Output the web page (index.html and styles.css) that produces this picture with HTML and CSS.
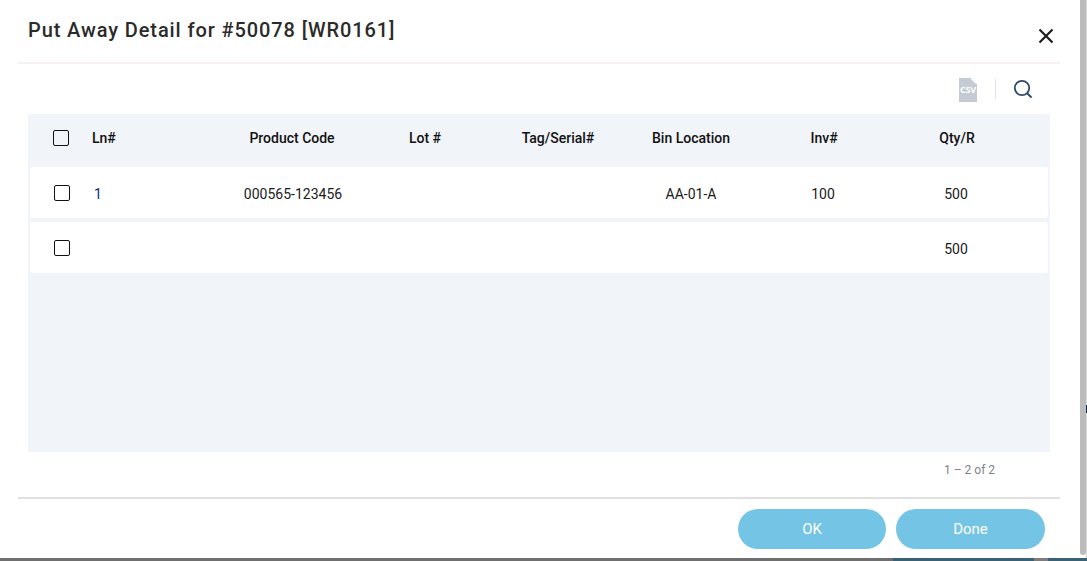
FILE: index.html
```html
<!DOCTYPE html>
<html lang="en">
<head>
<meta charset="utf-8">
<title>Put Away Detail</title>
<link rel="stylesheet" href="styles.css">
</head>
<body>
<div class="page">
  <div class="main">
    <div class="modal">
      <header class="head">
        <h1 class="title">Put Away Detail for #50078 [WR0161]</h1>
        <button class="close" aria-label="Close">
          <svg width="16" height="16" viewBox="0 0 16 16"><path d="M1.5 1.5 14.5 14.5M14.5 1.5 1.5 14.5" stroke="#1d1d1d" stroke-width="2.2" fill="none"/></svg>
        </button>
      </header>
      <div class="tools">
        <div class="csv">
          <svg class="csv-bg" width="18" height="24" viewBox="0 0 18 24"><path d="M0 0H12L18 6V24H0Z" fill="#c5cbd4"/><path d="M12.5 0.5 17.5 5.5" stroke="#fff" stroke-width="1.4"/></svg>
          <span class="csv-text">CSV</span>
        </div>
        <span class="sep"></span>
        <svg class="search" width="20" height="20" viewBox="0 0 20 20"><circle cx="9" cy="9" r="7.2" stroke="#2f4a66" stroke-width="1.8" fill="none"/><path d="M14.2 14.2 18.6 18.6" stroke="#2f4a66" stroke-width="2" fill="none"/></svg>
      </div>
      <div class="panel">
        <div class="grid headrow">
          <span class="box"></span>
          <span class="start">Ln#</span>
          <span>Product Code</span>
          <span>Lot #</span>
          <span>Tag/Serial#</span>
          <span>Bin Location</span>
          <span>Inv#</span>
          <span>Qty/R</span>
        </div>
        <div class="grid row">
          <span class="box"></span>
          <span class="cell start link">1</span>
          <span class="cell">000565-123456</span>
          <span class="cell"></span>
          <span class="cell"></span>
          <span class="cell shift-bin">AA-01-A</span>
          <span class="cell shift-inv">100</span>
          <span class="cell shift-qty">500</span>
        </div>
        <div class="grid row">
          <span class="box"></span>
          <span class="cell"></span>
          <span class="cell"></span>
          <span class="cell"></span>
          <span class="cell"></span>
          <span class="cell"></span>
          <span class="cell"></span>
          <span class="cell shift-qty">500</span>
        </div>
      </div>
      <div class="pager">1 – 2 of 2</div>
      <footer class="foot">
        <button class="btn">OK</button>
        <button class="btn done">Done</button>
      </footer>
    </div>
    <div class="track"></div>
    <div class="edge"><span class="edge-a"></span><span class="edge-b"></span><span class="edge-c"></span></div>
  </div>
  <div class="strip"><span class="s1"></span><span class="s2"></span><span class="s3"></span><span class="s4"></span></div>
</div>
</body>
</html>
```
FILE: styles.css
```css
* { box-sizing: border-box; }
html, body { margin: 0; padding: 0; background: #fff; }
body { font-family: Roboto, "Liberation Sans", sans-serif; color: #111; overflow: hidden; }
.page { width: 1087px; height: 561px; display: flex; flex-direction: column; overflow: hidden; }
.main { flex: 1; display: flex; min-height: 0; }
.modal { width: 1080px; padding: 0 20px 0 18px; display: flex; flex-direction: column; background: #fff; }
.head { height: 64px; border-bottom: 2px solid #f7f1f2; display: flex; justify-content: space-between; flex: none; padding-left: 10px; }
.title { margin: 18px 0 0; font-size: 20px; line-height: 24px; font-weight: 500; letter-spacing: 0.9px; color: #2b2b2b; }
.close { border: 0; background: none; padding: 0; margin: 28px 6px 0 0; width: 16px; height: 16px; display: block; }
.close svg { display: block; }
.tools { height: 50px; flex: none; display: flex; align-items: center; justify-content: flex-end; padding-right: 27px; }
.csv { width: 18px; height: 24px; position: relative; margin-top: 1px; }
.csv-bg { display: block; }
.csv-text { position: absolute; left: 0; right: 0; top: 7px; text-align: center; font: 700 9px/10px "Open Sans", sans-serif; letter-spacing: -0.2px; color: #fff; }
.sep { width: 1px; height: 20px; background: #dcdfe3; margin: 0 17px 0 18px; }
.search { display: block; }
.panel { margin-left: 10px; width: 1022px; height: 338px; flex: none; background: #f1f4f9; }
.grid { display: grid; grid-template-columns: 39px 133.5px repeat(6, 133px); align-items: center; text-align: center; font-size: 14px; line-height: 16px; }
.grid .start { text-align: left; }
.headrow { height: 53px; padding-left: 25px; font-weight: 500; font-size: 14px; padding-bottom: 5px; }
.row { height: 51px; margin: 0 2px 4px; padding-left: 24px; padding-top: 1px; background: #fff; border-radius: 3px; color: #1a1a1a; }
.cell { padding-top: 2px; }
.box { width: 16px; height: 16px; border: 1.4px solid #111; border-radius: 2px; background: #fff; display: block; }
.headrow .box { background: transparent; }
.grid .link { color: #0d1f8c; padding-left: 1px; }
.shift-bin { padding-right: 2px; }
.shift-inv { padding-right: 4px; }
.shift-qty { margin-left: -4px; }
.pager { height: 45px; flex: none; padding: 11px 0 0 926px; font-size: 12px; line-height: 14px; color: #7d8488; white-space: nowrap; }
.foot { flex: 1; border-top: 2px solid #e0e0e0; display: flex; justify-content: flex-end; gap: 10px; padding: 10px 15px 0 0; align-items: flex-start; }
.btn { width: 148px; height: 40px; border: 0; border-radius: 20px; background: #73c4e5; color: #fff; font: 400 15px Roboto, sans-serif; }
.done { width: 149px; }
.track { width: 6px; background: #bcbcbc; height: 555px; border-radius: 0 0 3px 3px; }
.edge { width: 1px; display: flex; flex-direction: column; background: #d8d8d8; }
.edge-a { height: 405px; }
.edge-b { height: 8px; background: #1a2f4a; }
.edge-c { height: 100px; }
.strip { height: 3px; flex: none; display: flex; }
.s1 { width: 893px; background: #6f6f6f; }
.s2 { width: 141px; background: #3a6274; }
.s3 { width: 14px; background: #7d7d7d; }
.s4 { flex: 1; background: #3a6274; }
```
